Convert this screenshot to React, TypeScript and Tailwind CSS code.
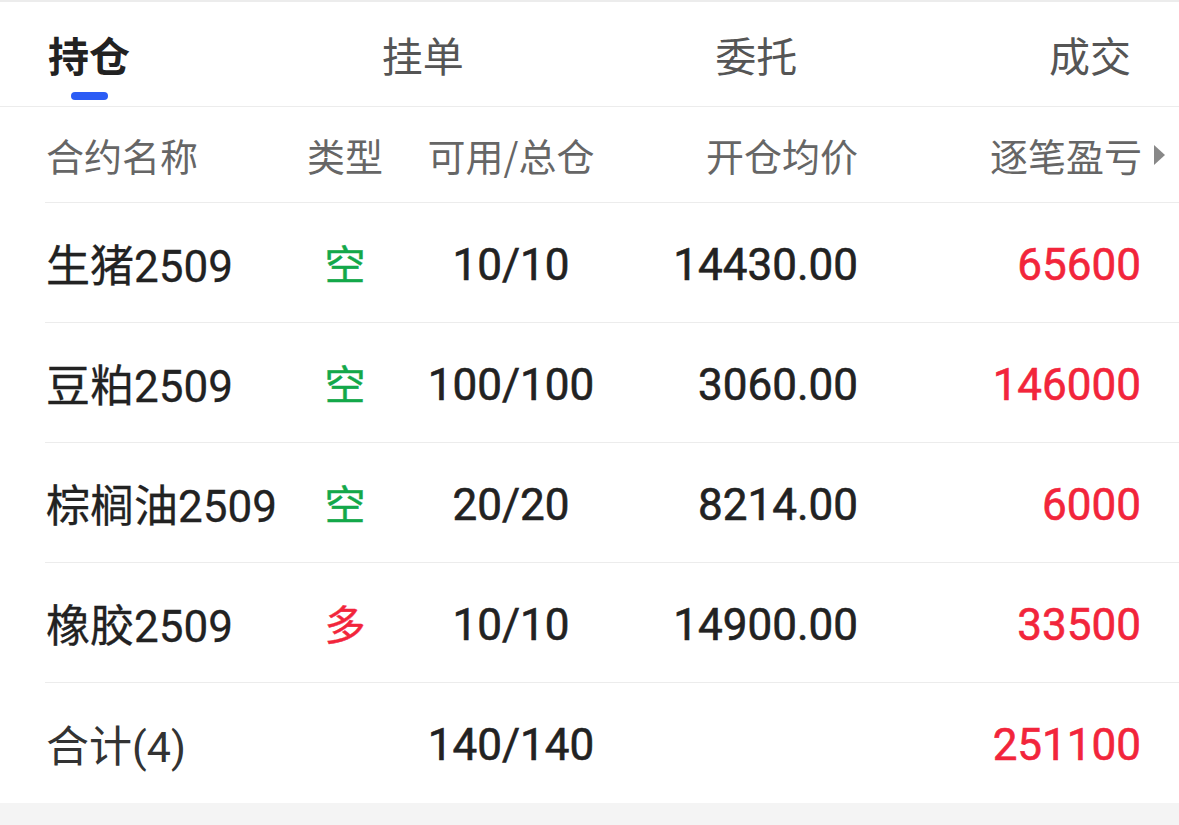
import React, { useState } from 'react';

interface Position {
  name: string;
  side: '空' | '多';
  qty: string;
  price: string;
  pnl: string;
}

const TABS = ['持仓', '挂单', '委托', '成交'];

const POSITIONS: Position[] = [
  { name: '生猪2509', side: '空', qty: '10/10', price: '14430.00', pnl: '65600' },
  { name: '豆粕2509', side: '空', qty: '100/100', price: '3060.00', pnl: '146000' },
  { name: '棕榈油2509', side: '空', qty: '20/20', price: '8214.00', pnl: '6000' },
  { name: '橡胶2509', side: '多', qty: '10/10', price: '14900.00', pnl: '33500' },
];

const CJK = { fontFamily: '"Noto Sans CJK SC", "Noto Sans", sans-serif' };
const NUM = { fontFamily: 'Roboto, "Noto Sans CJK SC", sans-serif' };

const ROW = 'grid grid-cols-[255px_90px_242px_226px_283px] items-center pr-[38px] border-b border-[#ececec]';
const FIG = 'text-[44px] pt-[4px] [-webkit-text-stroke:0.6px_currentColor]';

const App: React.FC = () => {
  const [tab, setTab] = useState(0);

  return (
    <div className="w-[1179px] h-[825px] bg-[#f4f4f4] flex flex-col" style={CJK}>
      <div className="h-[2px] bg-[#ececec]" />
      <div className="bg-white">
        {/* tabs */}
        <div className="h-[105px] flex justify-between items-start px-[48px] border-b border-[#ececec]">
          {TABS.map((t, i) => (
            <button
              key={t}
              onClick={() => setTab(i)}
              className={`flex flex-col items-center pt-[25px] text-[41px] leading-[54px] ${tab === i ? 'text-[#222] font-bold' : 'text-[#555]'}`}
            >
              {t}
              <span className={`mt-[11px] w-[37px] h-[8px] rounded-full ${tab === i ? 'bg-[#2b5cf5]' : 'bg-transparent'}`} />
            </button>
          ))}
        </div>

        <div className="ml-[45px]">
          {/* header */}
          <div className={`${ROW} h-[96px] text-[38px] text-[#666]`}>
            <div className="pl-[1px]">合约名称</div>
            <div className="text-center">类型</div>
            <div className="text-center">可用/总仓</div>
            <div className="text-right">开仓均价</div>
            <div className="flex justify-end items-center -mr-[25px]">
              逐笔盈亏
              <svg width="13" height="22" viewBox="0 0 13 22" className="ml-[11px]">
                <path d="M1 1 L12 11 L1 21 Z" fill="#888" />
              </svg>
            </div>
          </div>

          {POSITIONS.map(p => (
            <div key={p.name} className={`${ROW} h-[120px]`}>
              <div className="pl-[1px] pt-[8px] text-[44px] text-[#222] [-webkit-text-stroke:0.3px_currentColor]" style={NUM}>{p.name}</div>
              <div className={`text-center text-[41px] [-webkit-text-stroke:0.4px_currentColor] ${p.side === '空' ? 'text-[#13a84a]' : 'text-[#f2253b]'}`}>{p.side}</div>
              <div className={`text-center text-[#222] ${FIG}`} style={NUM}>{p.qty}</div>
              <div className={`text-right text-[#222] ${FIG}`} style={NUM}>{p.price}</div>
              <div className={`text-right text-[#f2253b] ${FIG}`} style={NUM}>{p.pnl}</div>
            </div>
          ))}

          {/* total */}
          <div className={`${ROW} h-[120px] border-b-0`}>
            <div className="pl-[1px] pt-[8px] text-[43px] text-[#333]" style={NUM}>合计(4)</div>
            <div />
            <div className={`text-center text-[#222] ${FIG}`} style={NUM}>140/140</div>
            <div />
            <div className={`text-right text-[#f2253b] ${FIG}`} style={NUM}>251100</div>
          </div>
        </div>
      </div>
      <div className="flex-1" />
    </div>
  );
};

export default App;
